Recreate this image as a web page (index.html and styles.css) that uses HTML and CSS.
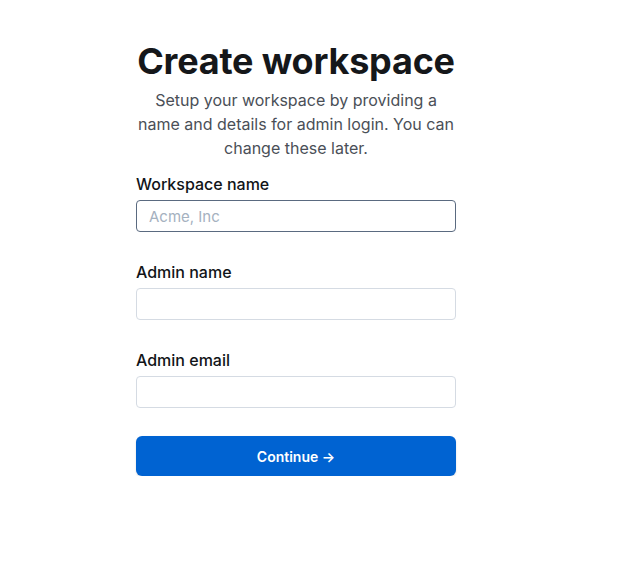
FILE: index.html
```html
<!DOCTYPE html>
<html lang="en">
<head>
<meta charset="utf-8">
<title>Create workspace</title>
<link rel="stylesheet" href="styles.css">
</head>
<body>
<main class="card">
  <h1 class="title">Create workspace</h1>
  <p class="subtitle">Setup your workspace by providing a name and details for admin login. You can change these later.</p>
  <form class="form">
    <div class="field">
      <label class="label" for="ws">Workspace name</label>
      <input class="input input-focus" id="ws" type="text" placeholder="Acme, Inc">
    </div>
    <div class="field">
      <label class="label" for="an">Admin name</label>
      <input class="input" id="an" type="text">
    </div>
    <div class="field">
      <label class="label" for="ae">Admin email</label>
      <input class="input" id="ae" type="email">
    </div>
    <button class="button" type="button">Continue →</button>
  </form>
</main>
</body>
</html>
```
FILE: styles.css
```css
html, body {
  margin: 0;
  padding: 0;
  background: #ffffff;
}
body {
  font-family: Inter, "Noto Sans", sans-serif;
  color: #111418;
}
.card {
  width: 320px;
  margin: 0 0 0 136px;
  padding-top: 39px;
  display: flex;
  flex-direction: column;
}
.title {
  margin: 0;
  font-size: 36px;
  line-height: 44px;
  font-weight: 700;
  text-align: center;
  color: #15171a;
  letter-spacing: -0.2px;
}
.subtitle {
  margin: 5px 0 0;
  font-size: 16px;
  line-height: 24px;
  text-align: center;
  color: #4a4f57;
}
.form {
  display: flex;
  flex-direction: column;
  margin-top: 12px;
}
.field {
  display: flex;
  flex-direction: column;
  gap: 4px;
  margin-bottom: 28px;
}
.label {
  font-size: 16px;
  line-height: 24px;
  font-weight: 450;
  color: #111418;
}
.input {
  box-sizing: border-box;
  height: 32px;
  width: 100%;
  margin: 0;
  padding: 0 12px;
  border: 1px solid #d5dbe3;
  border-radius: 4px;
  font-family: Inter, "Noto Sans", sans-serif;
  font-size: 15px;
  color: #111418;
  background: #fff;
  outline: none;
}
.input::placeholder {
  color: #a5b1c0;
}
.input-focus {
  border-color: #5a6a80;
}
.button {
  margin-top: 0;
  height: 40px;
  border: none;
  border-radius: 6px;
  background: #0063d2;
  color: #fff;
  font-family: Inter, "Noto Sans", sans-serif;
  font-size: 14px;
  font-weight: 600;
  box-shadow: 0 1px 2px rgba(0, 0, 0, 0.15);
  cursor: pointer;
}
```
